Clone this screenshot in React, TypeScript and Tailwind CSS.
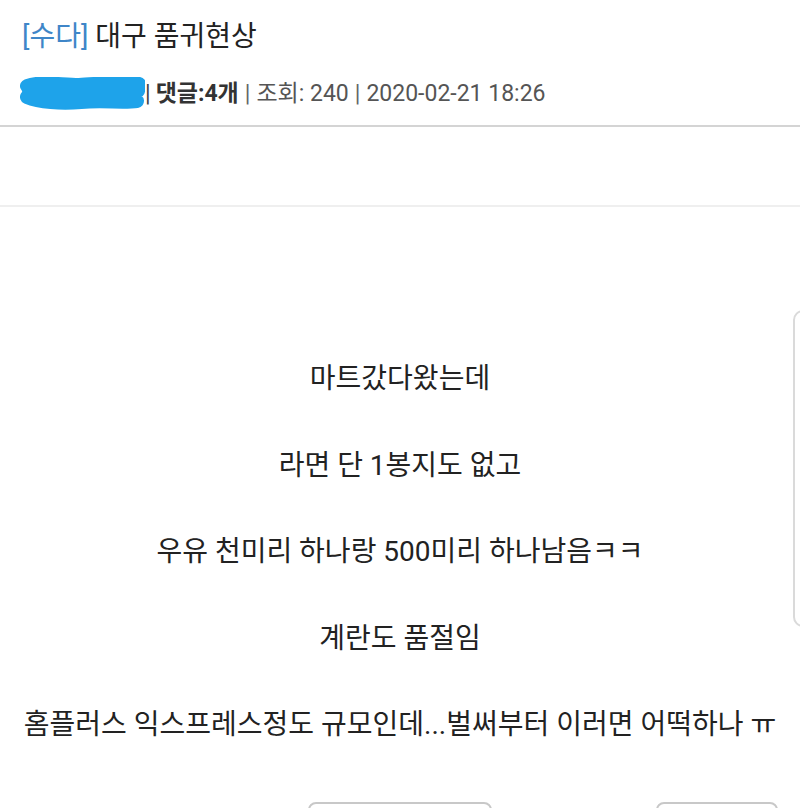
export default function App() {
  const lines = [
    '마트갔다왔는데',
    '라면 단 1봉지도 없고',
    '우유 천미리 하나랑 500미리 하나남음ㅋㅋ',
    '계란도 품절임',
    '홈플러스 익스프레스정도 규모인데...벌써부터 이러면 어떡하나 ㅠ',
  ]

  return (
    <div
      className="relative w-[800px] h-[808px] overflow-hidden bg-white text-[#222]"
      style={{ fontFamily: 'Roboto, "Noto Sans CJK KR", sans-serif' }}
    >
      {/* header */}
      <div className="px-[22px] pt-[19px] pb-[14px] border-b-2 border-[#d4d4d4]">
        <h1 className="text-[28px] leading-[36px] font-normal whitespace-nowrap">
          <span className="text-[#3f86c8]">[수다]</span> 대구 품귀현상
        </h1>
        <div className="mt-[22px] flex items-center text-[23px] leading-[32px] text-[#555] whitespace-nowrap">
          <svg width="128" height="34" viewBox="0 0 128 34" className="-ml-[5px]">
            <path
              d="M10 9 C24 4 44 8 62 8 C82 7 104 4 122 7 L121 14 C100 14 80 17 60 17 C40 18 22 16 10 20 C22 25 44 27 64 25 C86 23 106 26 120 24 M12 14 L118 16"
              fill="none"
              stroke="#1ea3ea"
              strokeWidth="14"
              strokeLinecap="round"
              strokeLinejoin="round"
            />
          </svg>
          <span className="text-[#444]">|</span>
          <span className="ml-[5px] font-bold text-[#333]">댓글:4개</span>
          <span className="mx-[6px] text-[#666]">|</span>
          <span>조회: 240</span>
          <span className="mx-[6px] text-[#666]">|</span>
          <span>2020-02-21 18:26</span>
        </div>
      </div>

      <div className="h-[80px] border-b-2 border-[#efefef]" />

      {/* body */}
      <div className="pt-[129px] flex flex-col items-center text-[28px] leading-[86.5px] text-[#222] whitespace-nowrap">
        {lines.map((line, i) => (
          <p key={i}>{line}</p>
        ))}
      </div>

      {/* bottom buttons */}
      <div className="mt-[33px] px-[22px] grid grid-cols-[1fr_auto_1fr]">
        <div />
        <button className="w-[184px] h-[48px] rounded-lg border-2 border-[#c8c8c8] bg-white" />
        <div className="flex justify-end">
          <button className="w-[122px] h-[48px] rounded-lg border-2 border-[#c8c8c8] bg-white" />
        </div>
      </div>

      {/* floating side tab */}
      <div className="absolute left-[793px] top-[310px] w-[40px] h-[317px] rounded-l-[10px] border-2 border-[#dadada] bg-white/60" />
    </div>
  )
}
